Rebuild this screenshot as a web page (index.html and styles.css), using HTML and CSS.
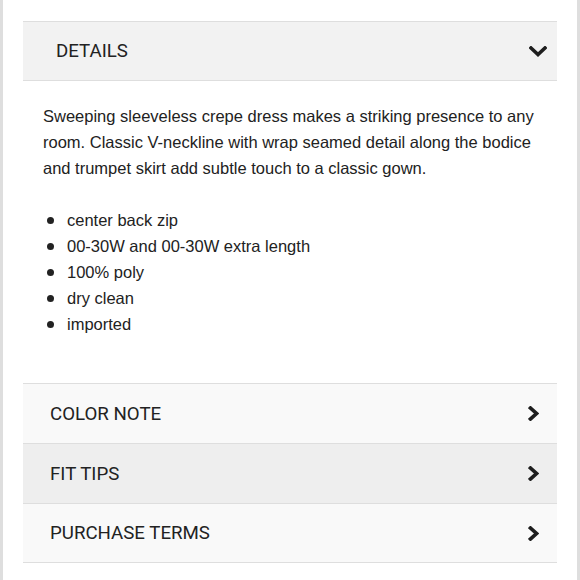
FILE: index.html
```html
<!DOCTYPE html>
<html lang="en">
  <head>
    <meta charset="UTF-8" />
    <meta name="viewport" content="width=device-width, initial-scale=1.0" />
    <title>Details</title>

    <link rel="stylesheet" href="styles.css">
  </head>
  <body>
    <div class="panel">
      <section class="acc-open">
        <div class="acc-head">
          <span>DETAILS</span>
          <svg class="chev-down" width="18" height="11" viewBox="0 0 18 11">
            <polyline points="2,2 9,8.5 16,2" />
          </svg>
        </div>

        <div class="acc-body">
          <p>
            Sweeping sleeveless crepe dress makes a striking presence to any
            room. Classic V-neckline with wrap seamed detail along the bodice
            and trumpet skirt add subtle touch to a classic gown.
          </p>
          <ul class="facts">
            <li>center back zip</li>
            <li>00-30W and 00-30W extra length</li>
            <li>100% poly</li>
            <li>dry clean</li>
            <li>imported</li>
          </ul>
        </div>
      </section>

      <ul class="acc-list">
        <li class="acc-row">
          <span>COLOR NOTE</span>
          <svg class="chev-right" width="11" height="15" viewBox="0 0 11 15">
            <polyline points="2.5,2 8.5,7.5 2.5,13" />
          </svg>
        </li>
        <li class="acc-row shaded">
          <span>FIT TIPS</span>
          <svg class="chev-right" width="11" height="15" viewBox="0 0 11 15">
            <polyline points="2.5,2 8.5,7.5 2.5,13" />
          </svg>
        </li>
        <li class="acc-row">
          <span>PURCHASE TERMS</span>
          <svg class="chev-right" width="11" height="15" viewBox="0 0 11 15">
            <polyline points="2.5,2 8.5,7.5 2.5,13" />
          </svg>
        </li>
      </ul>
    </div>
  </body>
</html>
```

FILE: styles.css
```css
/* General Styling */
* {
  margin: 0;
  padding: 0;
  box-sizing: border-box;
}

body {
  background-color: white;
  color: #222;
  font-family: "Liberation Sans", Arial, sans-serif;
}

.panel {
  height: 580px;
  padding: 21px 20px 0;
  border-left: 3px solid #dedede;
  border-right: 3px solid #dedede;
}

/* ------ */
/* Accordion headers */
.acc-head,
.acc-row {
  display: flex;
  align-items: center;
  justify-content: space-between;
  height: 60px;
  font-family: Roboto, sans-serif;
  font-size: 18.7px;
  color: #222;
}

.acc-head {
  padding: 0 10px 0 33px;
  background-color: #f2f2f2;
  border-top: 1px solid #dedede;
  border-bottom: 1px solid #dedede;
}

.acc-head svg,
.acc-row svg {
  fill: none;
  stroke: #1e1e1e;
  stroke-width: 3.6;
  stroke-linecap: square;
}

/* ------ */
/* Open section content */
.acc-body {
  padding: 22px 16px 0 20px;
  font-size: 16.5px;
  line-height: 26px;
}

.acc-body p {
  margin-bottom: 26px;
}

.facts {
  list-style: none;
}

.facts li {
  display: flex;
  align-items: center;
}

.facts li::before {
  content: '';
  width: 7px;
  height: 7px;
  margin: 0 13px 0 4px;
  border-radius: 50%;
  background-color: #222;
}

/* ------ */
/* Collapsed sections */
.acc-list {
  list-style: none;
  margin-top: 46px;
  border-bottom: 1px solid #dedede;
}

.acc-row {
  height: 60px;
  padding: 0 18px 0 27px;
  background-color: #f9f9f9;
  border-top: 1px solid #dedede;
}

.acc-row:last-child {
  height: 59px;
}

.acc-row.shaded {
  background-color: #eeeeee;
}
```
